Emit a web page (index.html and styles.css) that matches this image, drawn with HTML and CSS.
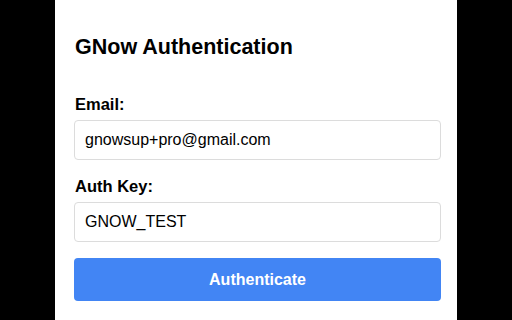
FILE: index.html
```html
<!DOCTYPE html>
<html>
<head>
<meta charset="utf-8">
<link rel="stylesheet" href="styles.css">
</head>
<body>
<div class="panel">
  <h2 class="title">GNow Authentication</h2>
  <label class="label" for="email">Email:</label>
  <input class="field field-first" id="email" type="text" value="gnowsup+pro@gmail.com">
  <label class="label" for="key">Auth Key:</label>
  <input class="field" id="key" type="text" value="GNOW_TEST">
  <button class="btn">Authenticate</button>
</div>
</body>
</html>
```

FILE: styles.css
```css
html, body {
  margin: 0;
  padding: 0;
  background: #000;
  height: 320px;
  overflow: hidden;
}
.panel {
  box-sizing: border-box;
  margin-left: 55px;
  width: 402px;
  height: 320px;
  background: #fff;
  padding: 35px 16px 0 19px;
  display: flex;
  flex-direction: column;
  font-family: "Liberation Sans", Arial, sans-serif;
  color: #000;
}
.title {
  margin: 0 0 35px 1px;
  font-size: 21.5px;
  line-height: 25px;
  font-weight: bold;
}
.label {
  font-size: 16.5px;
  line-height: 19px;
  font-weight: bold;
  margin: 0 0 6px 1px;
}
.field {
  box-sizing: border-box;
  height: 40px;
  width: 100%;
  margin: 0 0 17px 0;
  padding: 0 10px;
  border: 1px solid #dcdcdc;
  border-radius: 4px;
  font-family: "Liberation Sans", Arial, sans-serif;
  font-size: 16px;
  color: #000;
  background: #fff;
  outline: none;
}
.field + .label { margin-top: 0; }
.field:last-of-type { margin-bottom: 16px; }
.btn {
  box-sizing: border-box;
  height: 43px;
  width: 100%;
  border: none;
  border-radius: 4px;
  background: #4285f4;
  color: #fff;
  font-family: "Liberation Sans", Arial, sans-serif;
  font-size: 16px;
  font-weight: bold;
  padding: 0;
}
```
